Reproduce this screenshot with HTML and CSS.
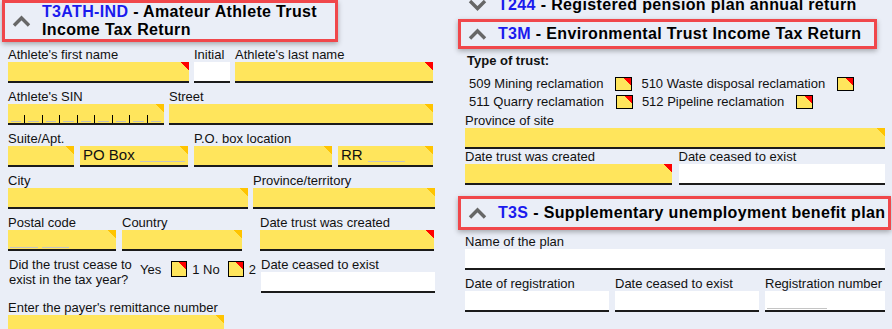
FILE: index.html
```html
<!DOCTYPE html>
<html lang="en">
<head>
    <meta charset="UTF-8">
    <meta name="viewport" content="width=device-width, initial-scale=1.0">
    <title>Trust Returns</title>
    <link rel="stylesheet" href="styles.css">
</head>
<body>
    <div class="page">
        <!-- left column: T3ATH-IND -->
        <div class="col left">
            <div class="sec-head two">
                <svg class="chev" width="19" height="12" viewBox="0 0 19 12"><polyline points="2,10.5 9.5,3 17,10.5"/></svg>
                <div class="title"><span class="code">T3ATH-IND</span> - Amateur Athlete Trust Income Tax Return</div>
            </div>
            <div class="rows">
                <div class="row r1">
                    <div><div class="lbl">Athlete's first name</div><div class="fld req"></div></div>
                    <div><div class="lbl">Initial</div><div class="fld white"></div></div>
                    <div><div class="lbl">Athlete's last name</div><div class="fld req"></div></div>
                </div>
                <div class="row r2">
                    <div><div class="lbl">Athlete's SIN</div>
                        <div class="fld amb sin">
                            <span></span><span></span><span></span><span></span><span></span><span></span><span></span><span></span><span></span>
                        </div>
                    </div>
                    <div><div class="lbl">Street</div><div class="fld amb"></div></div>
                </div>
                <div class="row r3">
                    <div><div class="lbl">Suite/Apt.</div><div class="fld amb"></div></div>
                    <div><div class="lbl">&nbsp;</div><div class="fld amb txt"><span>PO Box</span><span class="blank" style="width:45px"></span></div></div>
                    <div><div class="lbl">P.O. box location</div><div class="fld amb"></div></div>
                    <div><div class="lbl">&nbsp;</div><div class="fld amb txt"><span>RR</span><span class="blank" style="width:37px"></span></div></div>
                </div>
                <div class="row r4">
                    <div><div class="lbl">City</div><div class="fld amb"></div></div>
                    <div><div class="lbl">Province/territory</div><div class="fld amb"></div></div>
                </div>
                <div class="row r5">
                    <div><div class="lbl">Postal code</div><div class="fld amb mask"><span class="blank" style="width:28px"></span><span class="blank" style="width:27px"></span></div></div>
                    <div><div class="lbl">Country</div><div class="fld amb"></div></div>
                    <div class="created"><div class="lbl">Date trust was created</div><div class="fld req"></div></div>
                </div>
                <div class="row r6">
                    <div class="question">Did the trust cease to exist in the tax year?</div>
                    <div class="yesno">
                        <span class="yes">Yes</span>
                        <span class="chk"></span>
                        <span class="no">1 No</span>
                        <span class="chk chk-two"></span>
                        <span>2</span>
                    </div>
                    <div class="ceased"><div class="lbl">Date ceased to exist</div><div class="fld white"></div></div>
                </div>
                <div class="row r7">
                    <div><div class="lbl">Enter the payer's remittance number</div><div class="fld amb"></div></div>
                </div>
            </div>
        </div>

        <!-- right column: T244 / T3M / T3S -->
        <div class="col right">
            <div class="sec-head plain">
                <svg class="chev" width="19" height="12" viewBox="0 0 19 12"><polyline points="2,2 9.5,9.5 17,2"/></svg>
                <div class="title"><span class="code">T244</span> - Registered pension plan annual return</div>
            </div>
            <div class="sec-head t3m">
                <svg class="chev" width="19" height="12" viewBox="0 0 19 12"><polyline points="2,10.5 9.5,3 17,10.5"/></svg>
                <div class="title"><span class="code">T3M</span> - Environmental Trust Income Tax Return</div>
            </div>
            <div class="sec-body">
                <div class="type-lbl">Type of trust:</div>
                <div class="opts">
                    <div class="opt-row">
                        <div class="opt-item">509 Mining reclamation <span class="chk wide"></span></div>
                        <div class="opt-item">510 Waste disposal reclamation <span class="chk wide"></span></div>
                    </div>
                    <div class="opt-row">
                        <div class="opt-item">511 Quarry reclamation <span class="chk wide"></span></div>
                        <div class="opt-item">512 Pipeline reclamation <span class="chk wide"></span></div>
                    </div>
                </div>
                <div class="province">
                    <div class="lbl">Province of site</div>
                    <div class="fld amb"></div>
                </div>
                <div class="row halves">
                    <div><div class="lbl">Date trust was created</div><div class="fld req"></div></div>
                    <div><div class="lbl">Date ceased to exist</div><div class="fld white"></div></div>
                </div>
            </div>
            <div class="sec-head t3s">
                <svg class="chev" width="19" height="12" viewBox="0 0 19 12"><polyline points="2,10.5 9.5,3 17,10.5"/></svg>
                <div class="title"><span class="code">T3S</span> - Supplementary unemployment benefit plan</div>
            </div>
            <div class="sec-body">
                <div class="plan">
                    <div class="lbl">Name of the plan</div>
                    <div class="fld white"></div>
                </div>
                <div class="row thirds">
                    <div><div class="lbl">Date of registration</div><div class="fld white"></div></div>
                    <div><div class="lbl">Date ceased to exist</div><div class="fld white"></div></div>
                    <div><div class="lbl">Registration number</div><div class="fld white mask"><span class="blank" style="width:60px"></span></div></div>
                </div>
            </div>
        </div>
    </div>
</body>
</html>
```

FILE: styles.css
```css
* {
    box-sizing: border-box;
}

body {
    margin: 0;
    background-color: #eaeef7;
    font-family: "Liberation Sans", Arial, sans-serif;
    color: #111;
    overflow: hidden;
}

.page {
    display: grid;
    grid-template-columns: 436px 434px;
    column-gap: 22px;
}

/* section headers */
.sec-head {
    display: flex;
    align-items: center;
    border: 3px solid #f0474b;
    box-shadow: 0 2px 5px rgba(0, 0, 0, 0.3);
    padding: 3px 0 3px 7px;
}

.sec-head.plain {
    border-color: transparent;
    box-shadow: none;
    margin-top: -10px;
    padding-bottom: 2px;
}

.sec-head.two {
    width: 336px;
    margin-left: 2px;
    padding-top: 0;
    padding-bottom: 0;
}

.sec-head.t3m {
    width: 419px;
}

.sec-head.t3s {
    margin-top: 11px;
    margin-right: 1px;
    padding-top: 5px;
    padding-bottom: 5px;
}

.chev {
    flex: none;
}

.chev polyline {
    fill: none;
    stroke: #676767;
    stroke-width: 3.4;
}

.title {
    margin-left: 11px;
    font-size: 16px;
    font-weight: bold;
    line-height: 18px;
    letter-spacing: 0.35px;
    color: #000;
    white-space: nowrap;
}

.two .title {
    white-space: normal;
}

.code {
    color: #1a1aee;
}

/* labels and fields */
.lbl {
    font-size: 13px;
    line-height: 15px;
    white-space: nowrap;
}

.fld {
    height: 21px;
    background-color: #ffe55c;
    border-bottom: 2px solid #1b1b1b;
}

.fld.white {
    background-color: #fff;
}

.fld.req {
    background-image: linear-gradient(225deg, #ff0000 6px, transparent 6px);
}

.fld.amb {
    background-image: linear-gradient(225deg, #ffc400 6px, transparent 6px);
}

.blank {
    display: inline-block;
    height: 1px;
    background-color: #c4c4c4;
}

.fld.txt {
    display: flex;
    align-items: flex-end;
    gap: 5px;
    padding: 0 0 2px 3px;
    font-size: 15px;
    line-height: 17px;
}

.fld.txt .blank {
    margin-bottom: 1px;
}

.fld.mask {
    display: flex;
    align-items: flex-end;
    gap: 4px;
    padding: 0 0 1px 2px;
}

.fld.sin {
    display: flex;
    align-items: flex-end;
}

.fld.sin span {
    flex: 1;
    height: 8px;
    border-left: 1px solid #000;
    background: linear-gradient(#bdbdbd, #bdbdbd) center bottom 1px / calc(100% - 6px) 1px no-repeat;
}

.fld.sin span:first-child {
    border-left: none;
}

/* left column rows */
.rows {
    margin-top: 5px;
    padding-left: 8px;
    display: flex;
    flex-direction: column;
    gap: 6px;
}

.row {
    display: grid;
}

.r1 { grid-template-columns: 181px 36px 198px; column-gap: 5px; }
.r2 { grid-template-columns: 156px 264px; column-gap: 5px; }
.r3 { grid-template-columns: 66px 108px 138px 95px; column-gap: 6px; }
.r4 { grid-template-columns: 240px 182px; column-gap: 5px; }
.r5 { grid-template-columns: 108px 120px 186px; column-gap: 6px; }
.r6 { display: flex; }
.r7 { grid-template-columns: 216px; margin-top: 1px; }

.created {
    margin-left: 12px;
}

.question {
    width: 132px;
    padding-left: 1px;
    font-size: 13px;
    line-height: 15px;
}

.yesno {
    display: flex;
    align-items: center;
    height: 16px;
    margin-top: 4px;
    font-size: 13px;
}

.yes { margin-right: 10px; }
.no { margin: 0 8px 0 5px; }
.chk-two { margin-right: 5px; }

.ceased {
    width: 174px;
    margin-left: auto;
    margin-right: 1px;
}

.chk {
    display: inline-block;
    width: 16px;
    height: 16px;
    border: 1px solid #000;
    background: linear-gradient(225deg, #ff0000 5px, #ffe55c 5px);
}

.chk.wide {
    width: 17px;
    height: 14px;
}

/* right column */
.sec-body {
    padding: 0 7px;
}

.type-lbl {
    margin-top: 4px;
    padding-left: 2px;
    font-size: 13px;
    font-weight: bold;
    line-height: 15px;
}

.opts {
    margin-top: 7px;
    padding-left: 4px;
    font-size: 13px;
    line-height: 18px;
}

.opt-row {
    display: flex;
}

.opt-item {
    display: flex;
    align-items: center;
    gap: 12px;
    margin-right: 9px;
    white-space: nowrap;
}

.province {
    margin-top: 2px;
}

.halves {
    grid-template-columns: 1fr 1fr;
    column-gap: 7px;
}

.plan {
    margin-top: 4px;
}

.thirds {
    margin-top: 6px;
    grid-template-columns: 144px 144px 1fr;
    column-gap: 6px;
}
```
